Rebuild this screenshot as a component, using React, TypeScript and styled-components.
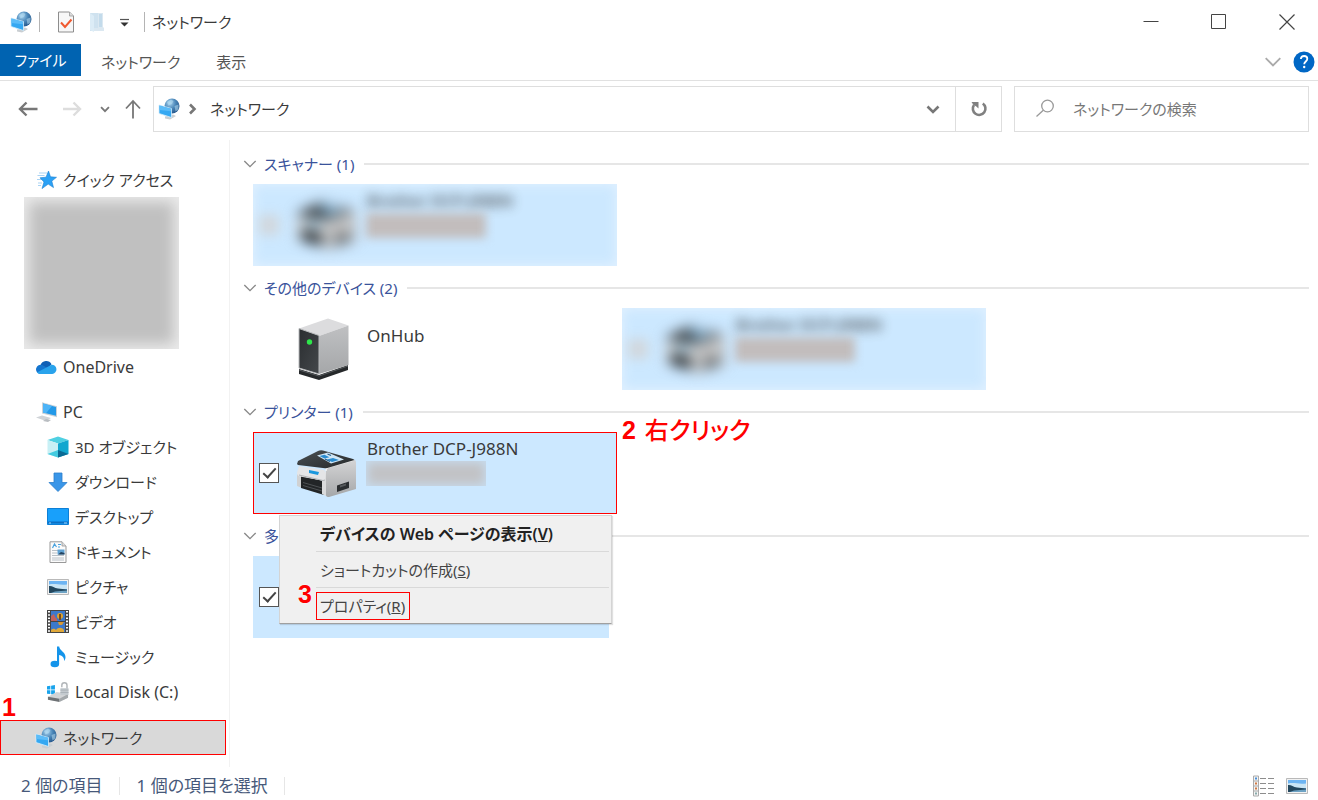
import React from "react";
import styled, { createGlobalStyle, css } from "styled-components";

const GlobalStyle = createGlobalStyle`
  *, *::before, *::after { box-sizing: border-box; }
  body {
    margin: 0;
    background: #fff;
    color: #3a3a3a;
    font-family: "Noto Sans", "Noto Sans CJK JP", sans-serif;
    font-size: 15px;
    line-height: 24px;
    font-feature-settings: "palt";
  }
  button, input {
    margin: 0;
    padding: 0;
    border: 0;
    background: none;
    color: inherit;
    font: inherit;
    font-feature-settings: inherit;
  }
  a { color: inherit; text-decoration: none; }
  svg { display: block; flex: none; }
`;

/* ---------- window frame ---------- */

const Window = styled.div`
  display: flex;
  flex-direction: column;
  min-height: 100vh;
`;

const TitleBar = styled.header`
  display: flex;
  align-items: center;
  height: 44px;
  padding: 0 0 0 10px;
`;

const QuickTools = styled.div`
  display: flex;
  align-items: center;
  gap: 14px;
  padding: 0 14px 0 17px;
  margin-left: 7px;
  border-left: 1px solid #b4b4b4;
  border-right: 1px solid #b4b4b4;
  height: 20px;
`;

const Title = styled.h1`
  margin: 0 0 0 7px;
  flex: 1;
  font-size: 15px;
  line-height: 24px;
  font-weight: 400;
`;

const IconButton = styled.button<{ $w?: number }>`
  display: flex;
  align-items: center;
  justify-content: center;
  height: 32px;
  width: ${(p) => (p.$w ? `${p.$w}px` : "auto")};
`;

const Caption = styled.div`
  display: flex;
  gap: 6px;
`;

const Ribbon = styled.nav`
  display: flex;
  align-items: flex-start;
  height: 37px;
  border-bottom: 1px solid #e1e1e1;
`;

const Tab = styled.button<{ $primary?: boolean }>`
  height: 36px;
  padding: 0 16px 0 20px;
  color: #555;
  ${(p) =>
    p.$primary &&
    css`
      height: 32px;
      padding: 0;
      width: 81px;
      background: #0063b1;
      color: #fff;
    `}
`;

const RibbonTools = styled.div`
  display: flex;
  align-items: center;
  height: 36px;
  gap: 11px;
  margin-left: auto;
  padding-right: 3px;
`;

const NavRow = styled.div`
  display: flex;
  align-items: center;
  height: 56px;
  padding: 0 9px 0 11px;
`;

const AddressBar = styled.div`
  display: flex;
  align-items: center;
  flex: 1;
  min-width: 0;
  height: 46px;
  padding-left: 4px;
  border: 1px solid #dedede;
`;

const Crumb = styled.button`
  margin-right: auto;
  padding: 0 8px 0 6px;
`;

const Refresh = styled(IconButton)`
  height: 44px;
  border-left: 1px solid #dedede;
`;

const SearchBox = styled.label`
  display: flex;
  align-items: center;
  gap: 18px;
  width: 295px;
  height: 46px;
  margin-left: 12px;
  padding-left: 20px;
  border: 1px solid #dedede;
`;

const SearchInput = styled.input`
  flex: 1;
  min-width: 0;
  outline: 0;
  &::placeholder { color: #777; opacity: 1; }
`;

/* ---------- navigation pane ---------- */

const Body = styled.div`
  display: flex;
  flex: 1;
  padding-top: 3px;
`;

const Sidebar = styled.nav`
  width: 230px;
  flex: none;
  padding-top: 22px;
  border-right: 1px solid #f2f2f2;
`;

const TreeItem = styled.a<{ $child?: boolean; $gap?: boolean; $latin?: boolean; $selected?: boolean }>`
  position: relative;
  display: flex;
  align-items: center;
  gap: 6px;
  height: 35px;
  margin-top: ${(p) => (p.$gap ? "10px" : "0")};
  padding-left: ${(p) => (p.$child ? "47px" : "35px")};
  font-size: ${(p) => (p.$latin ? "16px" : "15px")};
  ${(p) =>
    p.$selected &&
    css`
      margin-top: 11px;
      margin-right: 3px;
      padding-left: 34px;
      background: #d9d9d9;
      border: 1px solid #f00;
    `}
`;

const Redacted = styled.div`
  width: 155px;
  height: 152px;
  margin-left: 24px;
  background: #c0c0c0;
  box-shadow: inset 0 0 14px 5px #ebebeb;
`;

/* ---------- device list ---------- */

const Main = styled.main`
  flex: 1;
  min-width: 0;
  padding: 4px 9px 0 13px;
`;

const Group = styled.section`
  margin-bottom: 2px;
`;

const GroupHeader = styled.h2`
  display: flex;
  align-items: center;
  gap: 7px;
  height: 40px;
  margin: 0;
  font-size: 15px;
  line-height: 24px;
  font-weight: 400;
  color: #3a539b;
  &::after {
    content: "";
    flex: 1;
    height: 2px;
    margin-left: 3px;
    background: #e6e6e6;
  }
`;

const Tiles = styled.div`
  display: grid;
  grid-template-columns: repeat(auto-fill, 364px);
  gap: 5px;
  padding-left: 10px;
`;

const Tile = styled.div<{ $selected?: boolean; $marked?: boolean; $short?: boolean }>`
  position: relative;
  height: 82px;
  width: ${(p) => (p.$short ? "356px" : "auto")};
  background: ${(p) => (p.$selected ? "#cce8ff" : "none")};
  outline: ${(p) => (p.$marked ? "1px solid #f00" : "none")};
  outline-offset: -1px;
`;

const Check = styled.input`
  appearance: none;
  flex: none;
  width: 20px;
  height: 20px;
  margin-top: 31px;
  border: 1px solid #555;
  background: #fff;
  &:checked::after {
    content: "";
    display: block;
    width: 13px;
    height: 7px;
    margin: 4px 0 0 3px;
    border-left: 2px solid #444;
    border-bottom: 2px solid #444;
    transform: rotate(-48deg);
  }
`;

const CheckSpace = styled.div`
  width: 20px;
`;

const Art = styled.div`
  margin: 10px 0 0 16px;
  width: 62px;
`;

const Info = styled.div<{ $alone?: boolean }>`
  padding: ${(p) => (p.$alone ? "16px" : "5px")} 0 0 10px;
`;

const Model = styled.div`
  font-size: 17px;
  line-height: 24px;
`;

const Masked = styled.div`
  width: 120px;
  height: 25px;
  margin-left: -1px;
  background: #c2c3c6;
  box-shadow: inset 0 0 10px 2px #c8dcee;
`;

const TileRow = styled.div<{ $blur?: boolean }>`
  display: flex;
  height: 82px;
  padding-left: 6px;
  ${(p) =>
    p.$blur &&
    css`
      overflow: hidden;
      box-shadow: inset 0 0 12px 1px #e2f1ff;
      ${Check} {
        filter: blur(6px);
        opacity: 0.5;
        background: #d8c8bc;
        border-color: #d0c4bb;
      }
      ${Check}::after { display: none; }
      ${Art} { filter: blur(7px); }
      ${Model} { filter: blur(6px); opacity: 0.8; font-weight: 600; font-size: 16px; }
      ${Masked} { filter: blur(5px); background: #c2bdbd; box-shadow: none; }
    `}
`;

/* ---------- context menu ---------- */

const Menu = styled.ul`
  position: absolute;
  z-index: 2;
  left: 26px;
  top: 83px;
  width: 333px;
  margin: 0;
  padding: 0 2px 0 36px;
  list-style: none;
  background: #f0f0f0;
  border: 1px solid #d4d4d4;
  border-bottom-color: #a0a0a0;
  box-shadow: 1px 1px 1px rgba(0, 0, 0, 0.12);
`;

const MenuEntry = styled.li`
  display: flex;
  align-items: center;
  height: 36px;
  border-top: 1px solid #d9d9d9;
  &:first-child {
    height: 35px;
    border-top: 0;
  }
`;

const MenuButton = styled.button<{ $bold?: boolean; $marked?: boolean }>`
  height: 28px;
  padding: 0 4px 0 3px;
  border: 1px solid ${(p) => (p.$marked ? "#f00" : "transparent")};
  font-weight: ${(p) => (p.$bold ? 600 : 400)};
  font-size: ${(p) => (p.$bold ? "16px" : "15px")};
  color: ${(p) => (p.$bold ? "#222" : "#444")};
  white-space: nowrap;
`;

/* ---------- step numbers ---------- */

const Step = styled.span<{ $x: number; $y: number }>`
  position: absolute;
  z-index: 3;
  left: ${(p) => p.$x}px;
  top: ${(p) => p.$y}px;
  color: #f00;
  font-family: "Liberation Sans", "Noto Sans CJK JP", sans-serif;
  font-size: 25px;
  line-height: 28px;
  font-weight: 700;
  white-space: nowrap;
  text-shadow: 0 0 2px #fff;
`;

const StepText = styled.span`
  padding-left: 2px;
  font-size: 24px;
  font-weight: 500;
`;

/* ---------- status bar ---------- */

const StatusBar = styled.footer`
  display: flex;
  align-items: center;
  height: 33px;
  padding: 4px 10px 0 4px;
  font-size: 17px;
  color: #47597a;
`;

const StatusText = styled.span`
  padding: 0 16px 0 17px;
  line-height: 18px;
  border-right: 1px solid #e6e6e6;
`;

const ViewButtons = styled.div`
  display: flex;
  gap: 12px;
  margin-left: auto;
`;

/* ---------- icons ---------- */

const NetworkIcon = () => (
  <svg width="22" height="22" viewBox="0 0 22 22">
    <defs>
      <radialGradient id="globe" cx="0.35" cy="0.3" r="0.8">
        <stop offset="0" stopColor="#a9d4ef" />
        <stop offset="0.5" stopColor="#4a86b8" />
        <stop offset="1" stopColor="#1f4f84" />
      </radialGradient>
    </defs>
    <path d="M7 18.500l8-2 3 1.500-6 3.500-5-1z" fill="#c9ced2" />
    <circle cx="14" cy="8" r="7.500" fill="url(#globe)" />
    <path d="M9 4l4-2.500 2.500 1.500-1.500 3-3.500 1.500zM16.500 8l4-1.500v5l-3 2z" fill="#b8def2" opacity=".55" />
    <path d="M1 7l12.500 3.500v9L1 15.500z" fill="#35a8f2" stroke="#d5eefb" strokeWidth=".8" />
    <path d="M1.500 7.500l11.500 3.300v2.500L1.500 12z" fill="#5cbcf8" />
  </svg>
);

const CheckedPageIcon = () => (
  <svg width="18" height="22" viewBox="0 0 18 22">
    <path d="M1.500 1h11L16.500 5v16h-15z" fill="#f7f7f7" stroke="#8d8d8d" />
    <path d="M12.500 1v4h4" fill="#ddd" stroke="#999" strokeWidth=".8" />
    <path d="M4 11.500l4 4.500 6.500-7.500" fill="none" stroke="#f0592f" strokeWidth="2" />
  </svg>
);

const FolderIcon = () => (
  <svg width="16" height="22" viewBox="0 0 16 22">
    <path d="M1 2h9v18H1z" fill="#cfe2ef" />
    <path d="M1 2l4 3v16l-4-2z" fill="#dcecf6" />
    <path d="M9 2h5v14l1 1v3H5v-3h4z" fill="#dbe8f1" />
    <path d="M10 3h3v13h-3z" fill="#c3dbeb" />
  </svg>
);

const CustomizeIcon = () => (
  <svg width="11" height="10" viewBox="0 0 11 10">
    <path d="M1 2.500h9" stroke="#555" strokeWidth="1.200" />
    <path d="M1.500 5.500h8L5.500 9.500z" fill="#333" />
  </svg>
);

const Chevron = ({ w = 15, color = "#888", sw = 1.6 }: { w?: number; color?: string; sw?: number }) => (
  <svg width={w} height={w} viewBox="0 0 16 16" fill="none" stroke={color} strokeWidth={sw}>
    <path d="M1.500 4.500L8 11l6.500-6.500" />
  </svg>
);

const SmallChevron = ({ size = 14, color = "#777", right = false }: { size?: number; color?: string; right?: boolean }) => (
  <svg width={size} height={size} viewBox="0 0 14 14" fill="none" stroke={color} strokeWidth="2.600">
    <path d={right ? "M5 2.500L9.500 7 5 11.500" : "M1.500 4.500L7 10l5.500-5.500"} />
  </svg>
);

const Arrow = ({ kind, color }: { kind: "left" | "right" | "up"; color: string }) => (
  <svg width="20" height="20" viewBox="0 0 20 20" fill="none" stroke={color} strokeWidth={kind === "up" ? 1.8 : 2.4}>
    {kind === "left" && <path d="M19.500 10H2M8.500 3.500L2 10l6.500 6.500" />}
    {kind === "right" && <path d="M1 10h17M11.500 3.500L18 10l-6.500 6.500" />}
    {kind === "up" && <path d="M11 19.500V2M4 9.500L11 2l7 7.500" />}
  </svg>
);

const RefreshIcon = () => (
  <svg width="18" height="18" viewBox="0 0 18 18">
    <path d="M12.800 3.500A6.300 6.300 0 1 1 4 5" fill="none" stroke="#808080" strokeWidth="2.600" />
    <path d="M1.500 2h7v6.500L6 6.200 3.500 5z" fill="#808080" />
  </svg>
);

const SearchIcon = () => (
  <svg width="20" height="20" viewBox="0 0 20 20" fill="none" stroke="#999" strokeWidth="1.300">
    <circle cx="12.500" cy="7" r="5.800" />
    <path d="M8.300 11.200L1.500 17.500" />
  </svg>
);

const HelpIcon = () => (
  <svg width="22" height="22" viewBox="0 0 22 22">
    <circle cx="11" cy="11" r="10.500" fill="#0067c5" />
    <path d="M7.800 8c.2-2 1.500-3 3.300-3s3.200 1 3.200 2.800c0 2.700-3.100 2.700-3.100 5.400" fill="none" stroke="#fff" strokeWidth="1.800" />
    <circle cx="11.200" cy="16" r="1.200" fill="#fff" />
  </svg>
);

const StarIcon = () => (
  <svg width="22" height="20" viewBox="0 0 22 20">
    <path d="M4 3h8M2.500 5.500h7M2 9.500h6M3 13h4M3 15.500h3" stroke="#a9d3f4" strokeWidth="1.200" />
    <path d="M13.500 1l2 5.800 6 .5-4.700 3.800 1.700 6.500-5.300-3.500-6.200 4.500 2-6.600-4-4.200 6-.6z" fill="#2ba1f5" stroke="#1c7fd0" strokeWidth=".6" />
  </svg>
);

const CloudIcon = () => (
  <svg width="22" height="16" viewBox="0 0 24 16">
    <path d="M6 6a6.500 6.500 0 0 1 12-1l-5 6z" fill="#0f5fb5" />
    <path d="M5.500 15.500a5 5 0 1 1 2.500-9.600L17 11l-4 4.500z" fill="#1475cf" />
    <path d="M18 5.500a5 5 0 0 1 .8 10H5.500a5 5 0 0 1-3.500-1.500L13.500 8z" fill="#29a3ec" />
  </svg>
);

const PcIcon = () => (
  <svg width="22" height="20" viewBox="0 0 22 20">
    <path d="M7 .3l15 4v11L7 11.500z" fill="#c9d2d9" />
    <path d="M8 1.500l13 3.600v8.700L8 10.500z" fill="#2399e8" />
    <path d="M8 1.500l9 2.500-6 7.200L8 10.500z" fill="#4db4f8" />
    <path d="M1 15.500l6-2 9 2.500-5 3z" fill="#cfd3d7" />
    <path d="M11 17l5 1-3 2-5-1z" fill="#b9bdc1" />
  </svg>
);

const CubeIcon = () => (
  <svg width="22" height="22" viewBox="0 0 22 22">
    <path d="M11 .5l10.500 3.500L11 7.500.5 4z" fill="#4fd0e2" />
    <path d="M.5 4L11 7.500v14L.5 18z" fill="#c8f0f5" />
    <path d="M21.500 4L11 7.500v14L21.500 18z" fill="#11a7cf" />
    <path d="M.5 18L11 14v7.500z" fill="#43cbe0" />
    <path d="M21.500 18L11 14v7.500z" fill="#0b6a94" />
  </svg>
);

const DownloadIcon = () => (
  <svg width="22" height="20" viewBox="0 0 22 20">
    <path d="M7 1h8v9.500h5L11 19.500 2 10.500h5z" fill="#3a96e8" stroke="#2b7fcc" strokeWidth=".8" />
  </svg>
);

const DesktopIcon = () => (
  <svg width="22" height="17" viewBox="0 0 22 17">
    <path d="M.5.5h21v16H.5z" fill="#18a0fb" stroke="#0d7fd6" />
    <path d="M1 14.500h20" stroke="#0d6fc2" strokeWidth="2" />
    <path d="M2 15h2M17 15h3" stroke="#9cd7ff" />
  </svg>
);

const DocumentIcon = () => (
  <svg width="22" height="22" viewBox="0 0 22 22">
    <path d="M3 .8h12L19 5v16.500H3z" fill="#fbfbfb" stroke="#999" />
    <path d="M15 .8V5h4" fill="#ddd" stroke="#999" strokeWidth=".8" />
    <path d="M5.500 7l2-4 2 3M11 3.500h3M11 6h2" fill="none" stroke="#4aa3df" strokeWidth="1.200" />
    <path d="M5 9.500h6M5 12h5M5 14.500h12M5 17h12M5 19h12" stroke="#b9c0c6" />
    <path d="M10.500 8.500h7v5h-7z" fill="#5fa2d3" />
    <path d="M11 13.500l3-2.500 3.500 1v1.500z" fill="#24425e" />
  </svg>
);

const PictureIcon = () => (
  <svg width="22" height="16" viewBox="0 0 22 16">
    <path d="M.5.500h21v15H.5z" fill="#f2f2f2" stroke="#b9b9b9" />
    <path d="M2 2h18v12H2z" fill="#6db4f2" />
    <path d="M2 5.500c6-1.500 10 1 18 0v4.500H2z" fill="#c9e5f5" />
    <path d="M2 7c3-.5 5 2 9 2.500l9 1V14H2z" fill="#23475e" />
    <path d="M8 12.500l12-1V14H4z" fill="#6ea3c4" />
  </svg>
);

const VideoIcon = () => (
  <svg width="22" height="23" viewBox="0 0 22 23">
    <path d="M0 0h22v23H0z" fill="#454545" />
    <path d="M2 1v22M20 1v22" stroke="#fff" strokeWidth="2" strokeDasharray="1.600 1.600" />
    <path d="M4 1h14v10H4zM4 12h14v10H4z" fill="#3c79cb" />
    <circle cx="13" cy="6" r="3" fill="#e0a32c" />
    <path d="M12 4h2v6h-2z" fill="#7a4a17" />
    <path d="M4 6l3-2 1 3 2 2v2H4z" fill="#c2625c" />
    <path d="M11 12h6l-2 3h-3z" fill="#d99a34" />
    <path d="M4 20c2-2 4-1 5 0 2-3 6-3 8 0v2H4z" fill="#e0a83a" />
  </svg>
);

const MusicIcon = () => (
  <svg width="22" height="22" viewBox="0 0 22 22">
    <ellipse cx="7.800" cy="18" rx="4.300" ry="3.300" fill="#1494ea" />
    <path d="M10 .5h2.200c.3 4 6.300 5.500 6.300 10.500 0 1.600-.6 3-1.500 4 .6-4-2.500-5.500-4.900-6V18H10z" fill="#1494ea" />
  </svg>
);

const DiskIcon = () => (
  <svg width="22" height="22" viewBox="0 0 23 22">
    <path d="M0 5l3.500-.5v4H0zM4.300 4.400l4-.6v4.700h-4zM0 9.200h3.500v4L0 12.700zM4.300 9.200h4v4.700l-4-.6z" fill="#18a3ec" />
    <path d="M1 16l9-5 12 2v4l-9 4-12-2z" fill="#d2d4d6" />
    <path d="M1 16l12 2v3.500L1 19z" fill="#6e7275" />
    <path d="M13 18l9-5v4l-9 4.500z" fill="#a4a8ab" />
    <path d="M15.500 6V4a2.700 2.700 0 0 1 5.400 0v4" fill="none" stroke="#b1b5b8" strokeWidth="1.500" />
    <path d="M14 7h8.500v7H14z" fill="#c4cacf" />
    <path d="M14 9h8.500M14 11.500h8.500" stroke="#a9b0b6" />
  </svg>
);

const DetailsIcon = () => (
  <svg width="22" height="22" viewBox="0 0 22 22">
    <path d="M1.500 1h5v20h-5z" fill="#f4f4f4" stroke="#aaa" />
    <path d="M1.500 6h5M1.500 11h5M1.500 16h5" stroke="#aaa" />
    <path d="M3 3.500h2" stroke="#4a90d9" strokeWidth="2" />
    <path d="M3 8.500h2M3 13.500h2" stroke="#d07a45" strokeWidth="2" />
    <path d="M3 18.500h2" stroke="#8aa" strokeWidth="2" />
    <path d="M8 3.500h6M16 3.500h6M8 8.500h6M16 8.500h6M8 13.500h6M16 13.500h6M8 18.500h6M16 18.500h6" stroke="#8d8d8d" />
  </svg>
);

const ServerArt = () => (
  <svg width="62" height="62" viewBox="0 0 62 62">
    <defs>
      <linearGradient id="srvFront" x1="0" y1="0" x2="1" y2="1">
        <stop offset="0" stopColor="#2a2d30" />
        <stop offset="1" stopColor="#44484b" />
      </linearGradient>
      <linearGradient id="srvSide" x1="0" y1="0" x2="0" y2="1">
        <stop offset="0" stopColor="#bfc0c2" />
        <stop offset="1" stopColor="#a5a7a9" />
      </linearGradient>
    </defs>
    <path d="M4 51l20 6 29-10v5L24 62 4 56z" fill="#26292b" />
    <path d="M4 52l20 6 29-10" fill="none" stroke="#55595c" />
    <path d="M4 10.500L33 .5 53.500 7.500 24 18z" fill="#dcdcde" />
    <path d="M24 18L53.500 7.500V47L24 56z" fill="url(#srvSide)" />
    <path d="M4 10.500L24 17.500V56L4 50z" fill="url(#srvFront)" stroke="#b8babc" />
    <circle cx="14.500" cy="24" r="2.700" fill="#2ee64a" />
  </svg>
);

const PrinterArt = () => (
  <svg width="62" height="60" viewBox="0 0 62 60">
    <defs>
      <linearGradient id="prnSide" x1="0" y1="0" x2="0" y2="1">
        <stop offset="0" stopColor="#d4d4d5" />
        <stop offset="1" stopColor="#a5a7a9" />
      </linearGradient>
      <linearGradient id="prnTop" x1="0" y1="0" x2="1" y2="1">
        <stop offset="0" stopColor="#4b5053" />
        <stop offset="1" stopColor="#25282a" />
      </linearGradient>
    </defs>
    <path d="M2 32l5 2v12l-5-2z" fill="#d0d1d2" />
    <path d="M6 34l23 5v14L6 46z" fill="#222527" />
    <path d="M8 40.500l19 5.500M8 43.500l19 5.500" stroke="#4d5154" />
    <path d="M27 38l5-10 2 27q-4-1-7-3z" fill="#dadbdc" />
    <path d="M31 28q0-2 2-2.600L58.500 18q2.500-.5 2.500 2v27L34 55q-3 0-3-2z" fill="url(#prnSide)" />
    <path d="M31 29q0-3 2-3.600L58.500 18" fill="none" stroke="#f0f0f0" strokeWidth="1.500" />
    <path d="M2 22l1-3L23 9q2-1 5-.5l30 8.500 1.500 1L34 25.500q-2 1-4 .8L3 23z" fill="url(#prnTop)" />
    <path d="M4 24l25 4 2 2-1 8q-1 1-3 .6L5 34.500q-3-.5-3-4z" fill="#e4e5e7" />
    <path d="M4 33l24 5.500 2-.5" fill="none" stroke="#b0b3b6" />
    <path d="M14 28l10 2-1 3-9-2z" fill="#1b98de" />
    <path d="M22 13.500L33 10.500l16 7L36 21.500z" fill="#cfe6f6" />
    <path d="M24.500 14l5-1.300 5 2.500-5 1.400zM32 17.500l6-1.500 6 2-7 2z" fill="#2a8cd0" />
    <path d="M32.500 12l3.500 1.500M30 17l5 2.500" stroke="#225f8c" strokeWidth="1.200" />
    <path d="M42 43.500l12-4V46l-12 4z" fill="#2b2e31" />
    <path d="M45 43.500l6-2v2l-6 2z" fill="#55595c" />
  </svg>
);

/* ---------- page ---------- */

const tree = [
  { label: "PC", icon: <PcIcon />, gap: true, latin: true },
  { label: "3D オブジェクト", icon: <CubeIcon />, child: true },
  { label: "ダウンロード", icon: <DownloadIcon />, child: true },
  { label: "デスクトップ", icon: <DesktopIcon />, child: true },
  { label: "ドキュメント", icon: <DocumentIcon />, child: true },
  { label: "ピクチャ", icon: <PictureIcon />, child: true },
  { label: "ビデオ", icon: <VideoIcon />, child: true },
  { label: "ミュージック", icon: <MusicIcon />, child: true },
  { label: "Local Disk (C:)", icon: <DiskIcon />, child: true, latin: true },
];

const PrinterRow = ({ blur }: { blur?: boolean }) => (
  <TileRow $blur={blur}>
    <Check type="checkbox" defaultChecked aria-label="Brother DCP-J988N" />
    <Art><PrinterArt /></Art>
    <Info>
      <Model>Brother DCP-J988N</Model>
      <Masked />
    </Info>
  </TileRow>
);

const Header = ({ children }: { children: React.ReactNode }) => (
  <GroupHeader>
    <Chevron w={14} />
    {children}
  </GroupHeader>
);

export default function App() {
  return (
    <Window>
      <GlobalStyle />
      <TitleBar>
        <NetworkIcon />
        <QuickTools>
          <IconButton aria-label="プロパティ"><CheckedPageIcon /></IconButton>
          <IconButton aria-label="新しいフォルダー"><FolderIcon /></IconButton>
          <IconButton aria-label="カスタマイズ"><CustomizeIcon /></IconButton>
        </QuickTools>
        <Title>ネットワーク</Title>
        <Caption>
          <IconButton $w={62} aria-label="最小化">
            <svg width="16" height="16" viewBox="0 0 16 16"><path d="M.5 7.500h15" stroke="#444" /></svg>
          </IconButton>
          <IconButton $w={62} aria-label="最大化">
            <svg width="16" height="16" viewBox="0 0 16 16"><path d="M.5.500h14v14H.5z" fill="none" stroke="#444" /></svg>
          </IconButton>
          <IconButton $w={62} aria-label="閉じる">
            <svg width="16" height="16" viewBox="0 0 16 16"><path d="M.5.500l15 15M15.500.500l-15 15" stroke="#444" strokeWidth="1.200" /></svg>
          </IconButton>
        </Caption>
      </TitleBar>

      <Ribbon>
        <Tab $primary>ファイル</Tab>
        <Tab>ネットワーク</Tab>
        <Tab>表示</Tab>
        <RibbonTools>
          <IconButton aria-label="リボンの展開"><Chevron w={18} color="#aaa" /></IconButton>
          <IconButton aria-label="ヘルプ"><HelpIcon /></IconButton>
        </RibbonTools>
      </Ribbon>

      <NavRow>
        <IconButton $w={34} aria-label="戻る"><Arrow kind="left" color="#777" /></IconButton>
        <IconButton $w={54} aria-label="進む"><Arrow kind="right" color="#ddd" /></IconButton>
        <IconButton $w={12} aria-label="最近表示した場所"><SmallChevron size={10} /></IconButton>
        <IconButton $w={42} aria-label="上へ"><Arrow kind="up" color="#777" /></IconButton>
        <AddressBar>
          <NetworkIcon />
          <IconButton $w={24} aria-label="場所"><SmallChevron right /></IconButton>
          <Crumb>ネットワーク</Crumb>
          <IconButton $w={44} aria-label="以前の場所"><SmallChevron /></IconButton>
          <Refresh $w={46} aria-label="最新の情報に更新"><RefreshIcon /></Refresh>
        </AddressBar>
        <SearchBox>
          <SearchIcon />
          <SearchInput type="text" placeholder="ネットワークの検索" aria-label="ネットワークの検索" />
        </SearchBox>
      </NavRow>

      <Body>
        <Sidebar>
          <TreeItem href="#quick"><StarIcon />クイック アクセス</TreeItem>
          <Redacted />
          <TreeItem href="#onedrive" $latin><CloudIcon />OneDrive</TreeItem>
          {tree.map((t) => (
            <TreeItem key={t.label} href="#pc" $child={t.child} $gap={t.gap} $latin={t.latin}>
              {t.icon}
              {t.label}
            </TreeItem>
          ))}
          <TreeItem href="#network" $selected>
            <Step $x={1} $y={-28}>1</Step>
            <NetworkIcon />
            ネットワーク
          </TreeItem>
        </Sidebar>

        <Main>
          <Group>
            <Header>スキャナー (1)</Header>
            <Tiles>
              <Tile $selected><PrinterRow blur /></Tile>
            </Tiles>
          </Group>
          <Group>
            <Header>その他のデバイス (2)</Header>
            <Tiles>
              <Tile>
                <TileRow>
                  <CheckSpace />
                  <Art><ServerArt /></Art>
                  <Info $alone><Model>OnHub</Model></Info>
                </TileRow>
              </Tile>
              <Tile $selected><PrinterRow blur /></Tile>
            </Tiles>
          </Group>
          <Group>
            <Header>プリンター (1)</Header>
            <Tiles>
              <Tile $selected $marked>
                <PrinterRow />
                <Step $x={369} $y={-16}>2 <StepText>右クリック</StepText></Step>
                <Menu>
                  <MenuEntry><MenuButton $bold>デバイスの Web ページの表示(<u>V</u>)</MenuButton></MenuEntry>
                  <MenuEntry><MenuButton>ショートカットの作成(<u>S</u>)</MenuButton></MenuEntry>
                  <MenuEntry>
                    <MenuButton $marked>プロパティ(<u>R</u>)</MenuButton>
                    <Step $x={18} $y={64}>3</Step>
                  </MenuEntry>
                </Menu>
              </Tile>
            </Tiles>
          </Group>
          <Group>
            <Header>多</Header>
            <Tiles>
              <Tile $selected $short>
                <TileRow><Check type="checkbox" defaultChecked aria-label="多機能デバイス" /></TileRow>
              </Tile>
            </Tiles>
          </Group>
        </Main>
      </Body>

      <StatusBar>
        <StatusText>2 個の項目</StatusText>
        <StatusText>1 個の項目を選択</StatusText>
        <ViewButtons>
          <IconButton aria-label="詳細"><DetailsIcon /></IconButton>
          <IconButton aria-label="大アイコン"><PictureIcon /></IconButton>
        </ViewButtons>
      </StatusBar>
    </Window>
  );
}
